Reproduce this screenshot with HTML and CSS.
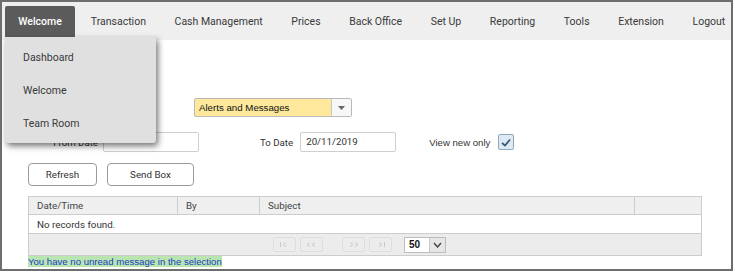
FILE: index.html
```html
<!DOCTYPE html>
<html lang="en">
<head>
  <meta charset="UTF-8">
  <title>Welcome - Alerts and Messages</title>
  <link rel="stylesheet" href="styles.css">
</head>
<body>

<div class="frame">
  <div class="topnav">
    <span class="nav-item active">Welcome</span>
    <span class="nav-item">Transaction</span>
    <span class="nav-item">Cash Management</span>
    <span class="nav-item">Prices</span>
    <span class="nav-item">Back Office</span>
    <span class="nav-item">Set Up</span>
    <span class="nav-item">Reporting</span>
    <span class="nav-item">Tools</span>
    <span class="nav-item">Extension</span>
    <span class="nav-item">Logout</span>
  </div>

  <!-- open submenu of Welcome -->
  <div class="submenu">
    <div class="submenu-item">Dashboard</div>
    <div class="submenu-item">Welcome</div>
    <div class="submenu-item">Team Room</div>
  </div>

  <div class="content">
    <div class="type-row">
      <div class="combo">
        <span class="combo-text">Alerts and Messages</span>
        <span class="combo-arrow">
          <svg width="7" height="4" viewBox="0 0 7 4"><path d="M0 0 L7 0 L3.5 4 Z" fill="#666"/></svg>
        </span>
      </div>
    </div>

    <div class="date-row">
      <span class="label from-label">From Date</span>
      <span class="field"></span>
      <span class="label to-label">To Date</span>
      <span class="field">20/11/2019</span>
      <span class="label view-label">View new only</span>
      <span class="checkbox">
        <svg width="10" height="9" viewBox="0 0 10 9"><path d="M1 5 L4 7.5 L9 1.5" fill="none" stroke="#3b5a7a" stroke-width="1.8"/></svg>
      </span>
    </div>

    <div class="btn-row">
      <button class="btn refresh">Refresh</button>
      <button class="btn sendbox">Send Box</button>
    </div>

    <table class="grid">
      <tr class="grid-head">
        <td class="col-date">Date/Time</td>
        <td class="col-by">By</td>
        <td class="col-subject">Subject</td>
        <td class="col-last"></td>
      </tr>
      <tr class="grid-row">
        <td colspan="4">No records found.</td>
      </tr>
      <tr class="grid-foot">
        <td colspan="4">
          <div class="pager">
            <span class="pg-btn"><svg width="9" height="5" viewBox="0 0 9 5"><path d="M0.5 0 V5 M6 0.5 L3 2.5 L6 4.5" fill="none" stroke="#c8c8c8"/></svg></span>
            <span class="pg-btn"><svg width="11" height="5" viewBox="0 0 11 5"><path d="M4 0.5 L1 2.5 L4 4.5 M9 0.5 L6 2.5 L9 4.5" fill="none" stroke="#c8c8c8"/></svg></span>
            <span class="pg-btn gap"><svg width="11" height="5" viewBox="0 0 11 5"><path d="M2 0.5 L5 2.5 L2 4.5 M7 0.5 L10 2.5 L7 4.5" fill="none" stroke="#c8c8c8"/></svg></span>
            <span class="pg-btn"><svg width="9" height="5" viewBox="0 0 9 5"><path d="M3 0.5 L6 2.5 L3 4.5 M8.5 0 V5" fill="none" stroke="#c8c8c8"/></svg></span>
            <span class="page-size">
              <span class="size-text">50</span>
              <span class="size-arrow"><svg width="9" height="6" viewBox="0 0 9 6"><path d="M1 1 L4.5 5 L8 1" fill="none" stroke="#444" stroke-width="1.4"/></svg></span>
            </span>
          </div>
        </td>
      </tr>
    </table>

    <div class="status"><span class="status-text">You have no unread message in the selection</span></div>
  </div>
</div>

</body>
</html>
```

FILE: styles.css
```css
body {
  margin: 0;
  padding: 0;
  background: #fff;
  font-family: Roboto, "Liberation Sans", sans-serif;
  color: #333;
}

.frame {
  position: relative;
  box-sizing: border-box;
  width: 733px;
  height: 271px;
  border: 2px solid #6e6e6e;
  background: #fff;
}

/* Top menu */
.topnav {
  display: flex;
  align-items: center;
  height: 38px;
  background: #efefef;
  padding-left: 3px;
}

.nav-item {
  flex-shrink: 0;
  font-size: 10.5px;
  padding: 0 14.3px;
  color: #3a3a3a;
  white-space: nowrap;
}

.nav-item.active {
  background: #5b5b5b;
  color: #fff;
  height: 31px;
  line-height: 31px;
  width: 70px;
  box-sizing: border-box;
  padding: 0;
  text-align: center;
  margin-right: 1.5px;
  border-radius: 2px 2px 0 0;
  font-weight: 500;
}

.submenu {
  position: absolute;
  left: 3px;
  top: 35px;
  width: 151px;
  background: #e0e0e0;
  box-shadow: 2px 3px 6px rgba(0, 0, 0, 0.55);
  border-radius: 0 0 3px 3px;
  padding: 4px 0 3px;
  z-index: 10;
}

.submenu-item {
  font-size: 10.5px;
  height: 33px;
  line-height: 33px;
  padding-left: 18px;
  color: #3a3a3a;
}

/* Content */
.content {
  padding: 58px 0 0 26px;
}

.type-row {
  padding-left: 166px;
}

.combo {
  display: flex;
  width: 158px;
  height: 19px;
  box-sizing: border-box;
  border: 1px solid #b9b9b9;
  border-radius: 2px;
  background: #fde89c;
}

.combo-text {
  flex: 1;
  font-family: "Liberation Sans", sans-serif;
  font-size: 9.7px;
  line-height: 17px;
  padding-left: 4px;
  color: #111;
}

.combo-arrow {
  width: 19px;
  display: flex;
  align-items: center;
  justify-content: center;
  border-left: 1px solid #c8c8c8;
  background: #f7f7f7;
}

.date-row {
  display: flex;
  align-items: center;
  margin-top: 15px;
  height: 20px;
}

.label {
  font-size: 9.7px;
  color: #333;
}

.from-label {
  width: 70px;
  text-align: right;
  padding-right: 5px;
}

.field {
  box-sizing: border-box;
  width: 96px;
  height: 20px;
  border: 1px solid #cfcfcf;
  border-radius: 2px;
  font-size: 9.7px;
  line-height: 18px;
  padding-left: 5px;
  color: #333;
}

.to-label {
  margin-left: 61px;
  margin-right: 7px;
}

.view-label {
  margin-left: 33px;
  margin-right: 8px;
  font-family: "Liberation Sans", sans-serif;
  font-size: 9.6px;
}

.checkbox {
  box-sizing: border-box;
  width: 16px;
  height: 16px;
  border: 1px solid #8fa6bb;
  border-radius: 2px;
  background: #dde9f4;
  display: flex;
  align-items: center;
  justify-content: center;
}

.btn-row {
  display: flex;
  gap: 10px;
  margin-top: 11px;
}

.btn {
  box-sizing: border-box;
  height: 23px;
  background: #fff;
  border: 1px solid #9a9a9a;
  border-radius: 4px;
  font-family: Roboto, sans-serif;
  font-size: 9.8px;
  color: #333;
  padding: 0;
}

.refresh {
  width: 69px;
}

.sendbox {
  width: 87px;
}

/* Grid */
.grid {
  margin-top: 10px;
  width: 674px;
  border-collapse: collapse;
  font-size: 9.8px;
  color: #444;
}

.grid td {
  border: 1px solid #cdcdcd;
  padding: 0 0 0 8px;
}

.grid-head td {
  background: #efefef;
  height: 17px;
}

.col-date {
  width: 140px;
}

.col-by {
  width: 73px;
}

.col-subject {
  width: 366px;
}

.grid-row td {
  height: 18px;
  color: #333;
}

.grid-foot td {
  background: #ececec;
  height: 21px;
}

.pager {
  display: flex;
  align-items: center;
  padding-left: 236px;
}

.pg-btn {
  box-sizing: border-box;
  width: 23px;
  height: 15px;
  border: 1px solid #dedede;
  border-radius: 2px;
  margin-right: 4px;
  display: flex;
  align-items: center;
  justify-content: center;
}

.pg-btn.gap {
  margin-left: 15px;
}

.page-size {
  display: flex;
  box-sizing: border-box;
  width: 42px;
  height: 16px;
  margin-left: 8px;
  border: 1px solid #bdbdbd;
  background: #fff;
}

.size-text {
  flex: 1;
  font-family: "Liberation Sans", sans-serif;
  font-weight: bold;
  font-size: 10px;
  line-height: 14px;
  padding-left: 4px;
  color: #111;
}

.size-arrow {
  width: 15px;
  display: flex;
  align-items: center;
  justify-content: center;
  border-left: 1px solid #c8c8c8;
  background: #e6e6e6;
}

.status {
  margin-top: -2px;
  line-height: 11px;
}

.status-text {
  font-family: "Liberation Sans", sans-serif;
  font-size: 9.6px;
  color: #1b3cc4;
  background: #b9e5b1;
}
```
